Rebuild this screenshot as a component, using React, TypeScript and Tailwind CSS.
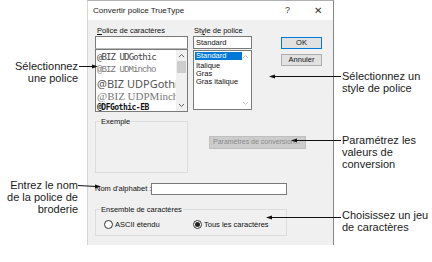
const ui = { fontFamily: '"Liberation Sans", Arial, sans-serif' };
const callout = { fontFamily: '"Liberation Sans", Arial, sans-serif' };

const Chevron = ({ up, light }: { up?: boolean; light?: boolean }) => (
  <svg width="7" height="5" viewBox="0 0 7 5" className="block">
    <path
      d={up ? "M1 4 L3.5 1.5 L6 4" : "M1 1 L3.5 3.5 L6 1"}
      fill="none"
      stroke={light ? "#c8c8c8" : "#606060"}
      strokeWidth="1"
    />
  </svg>
);

const Radio = ({ checked }: { checked?: boolean }) => (
  <span className="w-[9px] h-[9px] rounded-full border border-[#333] bg-white flex items-center justify-center shrink-0">
    {checked && <span className="w-[5px] h-[5px] rounded-full bg-[#222]" />}
  </span>
);

const FontList = () => (
  <div className="relative h-[63px] border border-[#7a7a7a] bg-white overflow-hidden">
    <div className="w-[82px] overflow-hidden whitespace-nowrap pl-[1px]">
      <div
        className="h-[13px] leading-[13px] text-[9px] tracking-[-0.9px] text-[#444] mt-[1px]"
        style={{ fontFamily: '"DejaVu Sans Mono", monospace' }}
      >
        @BIZ UDGothic
      </div>
      <div
        className="h-[13px] leading-[13px] text-[9px] tracking-[-0.9px] text-[#777]"
        style={{ fontFamily: '"Liberation Mono", monospace' }}
      >
        @BIZ UDMincho
      </div>
      <div
        className="h-[14px] leading-[14px] text-[11px] text-[#555]"
        style={{ fontFamily: '"Noto Sans", sans-serif' }}
      >
        @BIZ UDPGothic
      </div>
      <div
        className="h-[11px] leading-[11px] text-[11px] text-[#777]"
        style={{ fontFamily: '"Liberation Serif", serif' }}
      >
        @BIZ UDPMincho
      </div>
      <div
        className="h-[11px] leading-[11px] text-[8px] font-bold text-[#111] tracking-[-0.5px]"
        style={{ fontFamily: '"DejaVu Sans Mono", monospace' }}
      >
        @DFGothic-EB
      </div>
    </div>
    <div className="absolute top-0 right-0 bottom-0 w-[11px] bg-[#f0f0f0] flex flex-col items-center">
      <div className="h-[11px] flex items-center">
        <Chevron up />
      </div>
      <div className="w-[9px] h-[12px] bg-[#cdcdcd]" />
      <div className="flex-1" />
      <div className="h-[11px] flex items-center">
        <Chevron />
      </div>
    </div>
  </div>
);

const StyleList = () => (
  <div className="relative h-[60px] border border-[#7a7a7a] bg-white mt-[1px] text-[7.5px] text-[#111]">
    <div className="pl-[1px] pt-[1px] w-[48px]">
      <div className="h-[8px] leading-[8px] bg-[#0078d7] text-white pl-[1px]">Standard</div>
      <div className="h-[9px] leading-[9px] pl-[1px] mt-[0.5px]">Italique</div>
      <div className="h-[8.5px] leading-[8.5px] pl-[1px]">Gras</div>
      <div className="h-[8.5px] leading-[8.5px] pl-[1px]">Gras italique</div>
    </div>
    <div className="absolute top-0 right-0 bottom-0 w-[11px] flex flex-col items-center">
      <div className="h-[11px] flex items-center">
        <Chevron up light />
      </div>
      <div className="flex-1" />
      <div className="h-[11px] flex items-center">
        <Chevron light />
      </div>
    </div>
  </div>
);

const Dialog = () => (
  <div
    className="w-[247px] h-[245px] flex flex-col border-t border-l border-r border-t-[#b0b0b0] border-l-[#d6d6d6] border-r-[#858585] text-[7.5px] text-[#111]"
    style={ui}
  >
    <div className="h-[19px] bg-white flex items-center pl-[5px] shrink-0">
      <span className="text-[8px] text-[#222]">Convertir police TrueType</span>
      <span className="ml-auto text-[9px] text-[#333] mr-[24px]">?</span>
      <span className="text-[10px] text-[#333] mr-[11px]">✕</span>
    </div>
    <div className="flex-1 bg-[#f0f0f0] pl-[7px] pt-[6px]">
      <div className="flex">
        <div className="w-[93px]">
          <div className="h-[10px] leading-[10px] pl-[2px]">
            <span className="underline">P</span>olice de caractères
          </div>
          <div className="h-[13px] border border-[#7a7a7a] border-b-[#bbb] bg-white" />
          <FontList />
        </div>
        <div className="w-[59px] ml-[5px]">
          <div className="h-[10px] leading-[10px] pl-[1px]">
            St<span className="underline">y</span>le de police
          </div>
          <div className="h-[13px] border border-[#7a7a7a] bg-white leading-[11px] pl-[2px]">
            Standard
          </div>
          <StyleList />
        </div>
        <div className="w-[41px] ml-[29px] pt-[11px]">
          <div className="h-[12px] border border-[#0078d7] bg-[#e1e1e1] flex items-center justify-center">
            OK
          </div>
          <div className="h-[12px] mt-[5px] border border-[#adadad] bg-[#e1e1e1] flex items-center justify-center">
            Annuler
          </div>
        </div>
      </div>

      <div className="flex mt-[9px]">
        <div className="relative w-[93px] h-[52px] border border-[#dcdcdc]">
          <span className="absolute -top-[5px] left-[4px] bg-[#f0f0f0] px-[1px] leading-[9px]">Exemple</span>
        </div>
        <div className="ml-[21px] mt-[15px] w-[97px] h-[13px] bg-[#cccccc] border border-[#bfbfbf] text-[#8a8a8a] text-[7px] flex items-center pl-[3px] whitespace-nowrap">
          Paramètres de conversion...
        </div>
      </div>

      <div className="flex items-center mt-[10px]">
        <span className="w-[56px] whitespace-nowrap">Nom d'alphabet :</span>
        <div className="w-[136px] h-[12px] border border-[#7a7a7a] bg-white" />
      </div>

      <div className="relative mt-[14px] w-[192px] h-[27px] border border-[#dcdcdc] flex items-center pl-[8px] pt-[4px]">
        <span className="absolute -top-[5px] left-[4px] bg-[#f0f0f0] px-[1px] leading-[9px]">
          Ensemble de caractères
        </span>
        <div className="flex items-center gap-[2px] w-[89px]">
          <Radio />
          <span>ASCII étendu</span>
        </div>
        <div className="flex items-center gap-[2px]">
          <Radio checked />
          <span>Tous les caractères</span>
        </div>
      </div>
    </div>
  </div>
);

const Arrows = () => (
  <svg className="absolute inset-0 pointer-events-none" width="432" height="262" viewBox="0 0 432 262">
    <g stroke="#111" strokeWidth="1" fill="#111">
      <line x1="79" y1="66.5" x2="94" y2="66.5" />
      <polygon points="98,66.5 92,64.5 92,68.5" stroke="none" />
      <line x1="341" y1="76.5" x2="273" y2="76.5" />
      <polygon points="269,76.5 275,74.5 275,78.5" stroke="none" />
      <line x1="341" y1="140.5" x2="295" y2="140.5" />
      <polygon points="291,140.5 297,138.5 297,142.5" stroke="none" />
      <line x1="78" y1="185.5" x2="96" y2="186.5" />
      <polygon points="101,186.5 95,184.5 95,188.5" stroke="none" />
      <line x1="341" y1="217.5" x2="270" y2="217.5" />
      <polygon points="266,217.5 272,215.5 272,219.5" stroke="none" />
    </g>
  </svg>
);

export default function App() {
  return (
    <div className="relative w-[432px] h-[262px] bg-white flex overflow-hidden">
      <div className="w-[87px] shrink-0 text-right pr-[9px] text-[11px] leading-[12px] text-[#1a1a1a]" style={callout}>
        <div className="pt-[60px]">
          Sélectionnez
          <br />
          une police
        </div>
        <div className="mt-[95px]">
          Entrez le nom
          <br />
          de la police de
          <br />
          broderie
        </div>
      </div>
      <Dialog />
      <div className="flex-1 pl-[8px] text-[11px] leading-[12px] text-[#1a1a1a]" style={callout}>
        <div className="pt-[70px]">
          Sélectionnez un
          <br />
          style de police
        </div>
        <div className="mt-[40px]">
          Paramétrez les
          <br />
          valeurs de
          <br />
          conversion
        </div>
        <div className="mt-[39px]">
          Choisissez un jeu
          <br />
          de caractères
        </div>
      </div>
      <Arrows />
    </div>
  );
}
